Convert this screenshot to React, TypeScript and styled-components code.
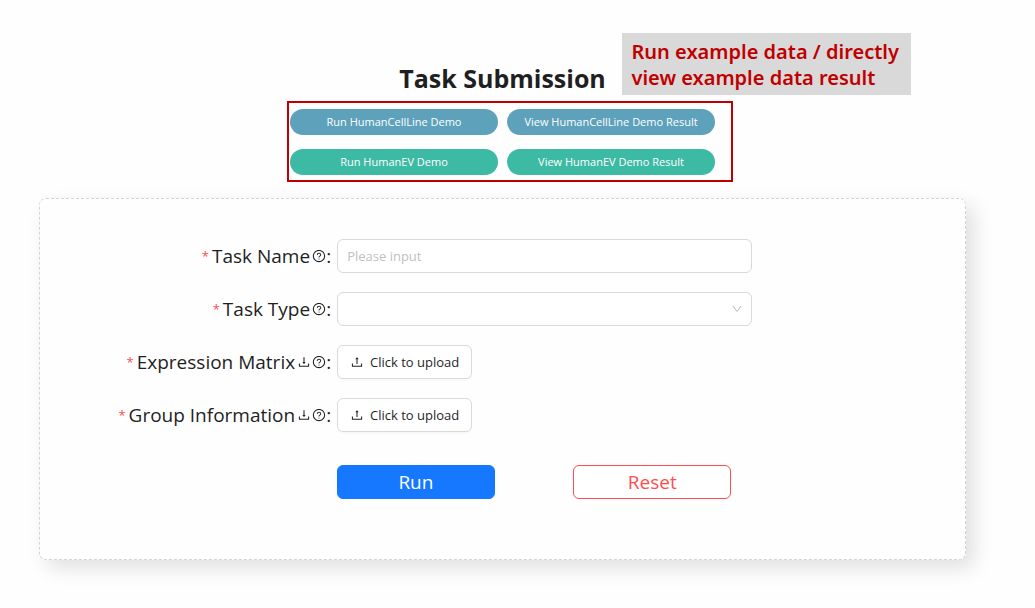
import React from "react";
import styled, { createGlobalStyle } from "styled-components";
import {
  AiOutlineDown,
  AiOutlineDownload,
  AiOutlineQuestionCircle,
  AiOutlineUpload,
} from "react-icons/ai";

const GlobalStyle = createGlobalStyle`
  *, *::before, *::after { box-sizing: border-box; }
  body {
    margin: 0;
    background: #fefefe;
    color: #1f1f1f;
    font-family: "Open Sans", "Noto Sans", sans-serif;
  }
  button, input, select { font-family: inherit; }
`;

const Page = styled.main`
  padding: 60px 69px 48px 39px;
`;

const Header = styled.header`
  position: relative;
  display: flex;
  flex-direction: column;
  align-items: center;
`;

const Title = styled.h1`
  margin: 0 0 13px;
  font-size: 25px;
  line-height: 36px;
  font-weight: 700;
`;

const Callout = styled.p`
  position: absolute;
  left: calc(50% + 119px);
  top: -27px;
  width: 289px;
  margin: 0;
  padding: 6px 8px 4px 10px;
  background: #d9d9d9;
  color: #c00000;
  font-family: "Noto Sans", sans-serif;
  font-size: 20px;
  line-height: 26px;
  font-weight: 600;
`;

const DemoGrid = styled.div`
  position: relative;
  display: grid;
  grid-template-columns: 208px 208px;
  gap: 14px 9px;
`;

const Highlight = styled.span`
  position: absolute;
  inset: -8px -18px -7px -3px;
  border: 2px solid #c00000;
  pointer-events: none;
`;

const DemoButton = styled.button<{ $color: string }>`
  height: 26px;
  padding: 0;
  border: 0;
  border-radius: 13px;
  background: ${({ $color }) => $color};
  color: #fff;
  font-size: 11px;
  line-height: 26px;
`;

const Form = styled.form`
  display: flex;
  flex-direction: column;
  gap: 19px;
  margin-top: 23px;
  padding: 40px 0 60px 1px;
  border: 1px dashed #d4d4d4;
  border-radius: 7px;
  box-shadow: 8px 8px 20px rgba(0, 0, 0, 0.12);
`;

const Row = styled.div`
  display: grid;
  grid-template-columns: 25fr 35fr 18fr;
  align-items: center;
`;

const Label = styled.label`
  display: flex;
  align-items: center;
  justify-content: flex-end;
  padding-right: 6px;
  font-size: 19px;
  line-height: 34px;
  white-space: nowrap;

  svg {
    width: 14px;
    height: 14px;
    margin-left: 1px;
  }
`;

const LabelText = styled.span`
  margin-right: 1px;
`;

const Required = styled.span`
  margin-right: 3px;
  color: #ff4d4f;
  font-size: 13px;
`;

const field = `
  width: 100%;
  height: 34px;
  border: 1px solid #d9d9d9;
  border-radius: 6px;
  background: #fff;
  color: #1f1f1f;
  font-size: 13px;
`;

const TextInput = styled.input`
  ${field}
  padding: 0 9px;
  &::placeholder { color: #bfbfbf; opacity: 1; }
`;

const SelectWrap = styled.div`
  position: relative;
  svg {
    position: absolute;
    right: 9px;
    top: 11px;
    width: 12px;
    height: 12px;
    color: #bfbfbf;
    pointer-events: none;
  }
`;

const Select = styled.select`
  ${field}
  display: block;
  padding: 0 28px 0 9px;
  appearance: none;
`;

const UploadButton = styled.button`
  display: flex;
  align-items: center;
  justify-content: center;
  gap: 6px;
  width: 135px;
  height: 34px;
  padding: 0;
  border: 1px solid #d9d9d9;
  border-radius: 6px;
  background: #fff;
  color: #1f1f1f;
  font-size: 13px;
  box-shadow: 0 2px 0 rgba(0, 0, 0, 0.02);

  svg { width: 14px; height: 14px; }
`;

const Actions = styled.div`
  grid-column: 2;
  display: grid;
  grid-template-columns: 38% 38%;
  column-gap: 19%;
  margin-top: 14px;
`;

const ActionButton = styled.button<{ $primary?: boolean }>`
  height: 34px;
  padding: 0;
  border: 1px solid ${({ $primary }) => ($primary ? "#1677ff" : "#ff4d4f")};
  border-radius: 6px;
  background: ${({ $primary }) => ($primary ? "#1677ff" : "#fff")};
  color: ${({ $primary }) => ($primary ? "#fff" : "#ff4d4f")};
  font-size: 19px;
  line-height: 32px;
`;

type FieldLabelProps = { htmlFor: string; text: string; download?: boolean };

function FieldLabel({ htmlFor, text, download }: FieldLabelProps) {
  return (
    <Label htmlFor={htmlFor}>
      <Required>*</Required>
      <LabelText>{text}</LabelText>
      {download && <AiOutlineDownload />}
      <AiOutlineQuestionCircle />:
    </Label>
  );
}

const demos = [
  { text: "Run HumanCellLine Demo", color: "#5ea1bb" },
  { text: "View HumanCellLine Demo Result", color: "#5ea1bb" },
  { text: "Run HumanEV Demo", color: "#3cbaa4" },
  { text: "View HumanEV Demo Result", color: "#3cbaa4" },
];

const uploads = [
  { id: "expression-matrix", text: "Expression Matrix" },
  { id: "group-information", text: "Group Information" },
];

export default function App() {
  return (
    <>
      <GlobalStyle />
      <Page>
        <Header>
          <Title>Task Submission</Title>
          <DemoGrid>
            {demos.map((demo) => (
              <DemoButton key={demo.text} type="button" $color={demo.color}>
                {demo.text}
              </DemoButton>
            ))}
            <Highlight />
          </DemoGrid>
          <Callout>Run example data / directly view example data result</Callout>
        </Header>
        <Form onSubmit={(event) => event.preventDefault()}>
          <Row>
            <FieldLabel htmlFor="task-name" text="Task Name" />
            <TextInput id="task-name" type="text" placeholder="Please input" />
          </Row>
          <Row>
            <FieldLabel htmlFor="task-type" text="Task Type" />
            <SelectWrap>
              <Select id="task-type" defaultValue="">
                <option value="" />
              </Select>
              <AiOutlineDown />
            </SelectWrap>
          </Row>
          {uploads.map((upload) => (
            <Row key={upload.id}>
              <FieldLabel htmlFor={upload.id} text={upload.text} download />
              <UploadButton id={upload.id} type="button">
                <AiOutlineUpload />
                Click to upload
              </UploadButton>
            </Row>
          ))}
          <Row>
            <Actions>
              <ActionButton type="submit" $primary>
                Run
              </ActionButton>
              <ActionButton type="reset">Reset</ActionButton>
            </Actions>
          </Row>
        </Form>
      </Page>
    </>
  );
}
